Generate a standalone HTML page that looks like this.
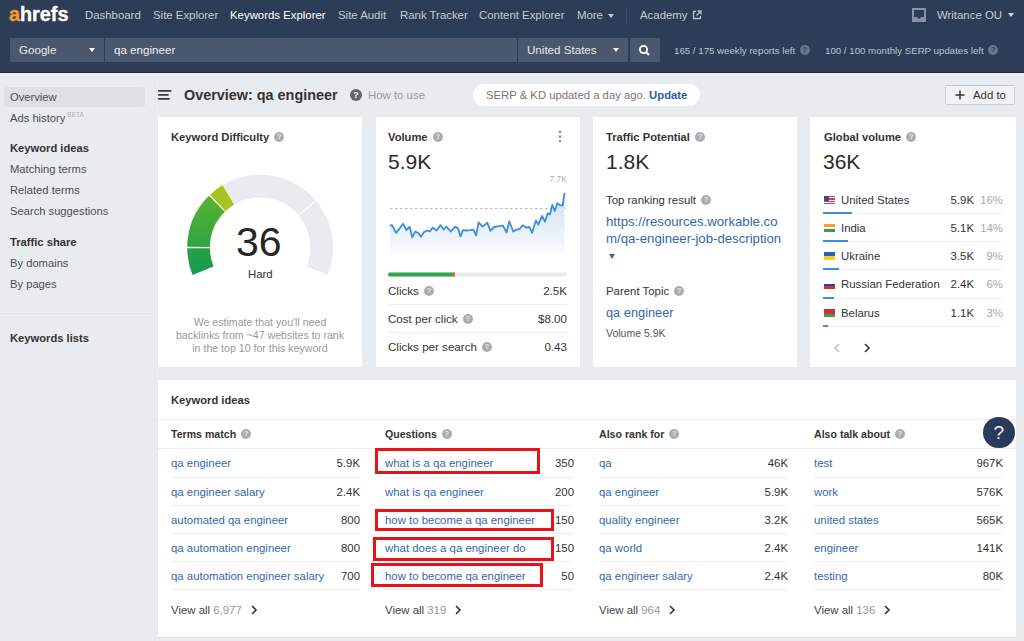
<!DOCTYPE html>
<html><head><meta charset="utf-8">
<style>
*{margin:0;padding:0;box-sizing:border-box}
html,body{width:1024px;height:641px;overflow:hidden;background:#e9ecef;font-family:"Liberation Sans",sans-serif;color:#333;}
.a{position:absolute;white-space:nowrap}
#hdr{position:absolute;left:0;top:0;width:1024px;height:73px;background:#2e3d57;border-bottom:1px solid #222a3f}
.nav{position:absolute;top:8.2px;font-size:11.4px;line-height:14px;color:#c5cbd6}
.box{position:absolute;background:#4a576f;top:38px;height:24px}
.card{position:absolute;background:#fff;top:117px;height:250px;width:204px}
.ct{position:absolute;font-weight:bold;font-size:11.2px;line-height:14px;color:#333}
.q{display:inline-block;width:10px;height:10px;border-radius:50%;background:#a9adb3;color:#e8e8e8;font-size:7.5px;line-height:10px;text-align:center;font-weight:bold;vertical-align:middle;position:relative;top:-1px;margin-left:2px}
.big{position:absolute;font-size:21px;line-height:24px;color:#2a2a2a}
.lk{color:#3567ad}
.sb{position:absolute;left:10px;font-size:11.2px;line-height:14px;color:#4a4d52}
.sbb{font-weight:bold;color:#333}
.row{position:absolute;font-size:11.4px;line-height:14px}
.sep{position:absolute;height:1px;background:#eceef1}
</style></head><body>
<div id="hdr"></div>
<!-- logo -->
<div class="a" style="left:9px;top:1.2px;font-size:22px;line-height:26px;font-weight:bold;color:#fff;transform:scale(0.9,0.9);transform-origin:0 21px;-webkit-text-stroke:0.4px #fff"><span style="color:#f39a26;-webkit-text-stroke:0.4px #f39a26">a</span>hrefs</div>
<div class="a nav" style="left:85px">Dashboard</div>
<div class="a nav" style="left:153px">Site Explorer</div>
<div class="a nav" style="left:230px;color:#fff">Keywords Explorer</div>
<div class="a nav" style="left:338px">Site Audit</div>
<div class="a nav" style="left:400px">Rank Tracker</div>
<div class="a nav" style="left:479px">Content Explorer</div>
<div class="a nav" style="left:577px">More</div><div class="a" style="left:608px;top:14px;width:0;height:0;border-left:3.0px solid transparent;border-right:3.0px solid transparent;border-top:4px solid #c5cbd6"></div>
<div class="a" style="left:626px;top:8px;width:1px;height:16px;background:#3d4a64"></div>
<div class="a nav" style="left:640px">Academy</div><svg class="a" style="left:692px;top:10px" width="10" height="10" viewBox="0 0 10 10"><path d="M4,1.5 H1.5 V8.5 H8.5 V6" fill="none" stroke="#b5bccb" stroke-width="1.3"/><path d="M5.5,1 H9 V4.5 M9,1 L4.5,5.5" fill="none" stroke="#b5bccb" stroke-width="1.3"/></svg>
<svg class="a" style="left:912px;top:8px" width="14" height="14" viewBox="0 0 14 14"><rect x="1" y="1" width="12" height="12" fill="none" stroke="#8991a6" stroke-width="2"/><path d="M1,9 H5 L6,10.5 H8 L9,9 H13 V13 H1Z" fill="#8991a6"/></svg>
<div class="a nav" style="left:937px">Writance OU</div><div class="a" style="left:1008px;top:13px;width:0;height:0;border-left:3.5px solid transparent;border-right:3.5px solid transparent;border-top:4px solid #d5dae3"></div>

<!-- search -->
<div class="box" style="left:10px;width:94px"></div>
<div class="a" style="left:19px;top:43px;font-size:11.6px;line-height:14px;color:#e6e9ef">Google</div>
<div class="a" style="left:88.5px;top:48px;width:0;height:0;border-left:3.5px solid transparent;border-right:3.5px solid transparent;border-top:4.5px solid #fff"></div>
<div class="box" style="left:105px;width:412px"></div>
<div class="a" style="left:114px;top:43px;font-size:11.6px;line-height:14px;color:#eef0f4">qa engineer</div>
<div class="box" style="left:518px;width:110px"></div>
<div class="a" style="left:527px;top:43px;font-size:11.6px;line-height:14px;color:#e6e9ef">United States</div>
<div class="a" style="left:612.5px;top:48px;width:0;height:0;border-left:3.5px solid transparent;border-right:3.5px solid transparent;border-top:4.5px solid #fff"></div>
<div class="box" style="left:630px;width:30px"></div>
<svg class="a" style="left:638px;top:44px" width="13" height="13" viewBox="0 0 13 13"><circle cx="5.5" cy="5.5" r="3.6" fill="none" stroke="#fff" stroke-width="1.8"/><line x1="8.2" y1="8.2" x2="11" y2="11" stroke="#fff" stroke-width="2"/></svg>
<div class="a" style="left:674px;top:44.5px;font-size:9.7px;line-height:12px;color:#bcc3d0">165 / 175 weekly reports left <span class="q" style="background:#6a7489;color:#2f3b56">?</span></div>
<div class="a" style="left:825px;top:44.5px;font-size:9.7px;line-height:12px;color:#bcc3d0">100 / 100 monthly SERP updates left <span class="q" style="background:#6a7489;color:#2f3b56">?</span></div>

<!-- sidebar -->
<div class="a" style="left:4px;top:87px;width:141px;height:20px;background:#dde0e4;border-radius:3px"></div><div class="a" style="left:154px;top:73px;width:1px;height:568px;background:#e4e7eb"></div>
<div class="a sb" style="top:89.5px">Overview</div>
<div class="a sb" style="top:111px">Ads history<span style="font-size:6.5px;color:#b0b3b8;position:relative;top:-5.5px;margin-left:2px">BETA</span></div>
<div class="a sb sbb" style="top:141px">Keyword ideas</div>
<div class="a sb" style="top:162px">Matching terms</div>
<div class="a sb" style="top:183px">Related terms</div>
<div class="a sb" style="top:204px">Search suggestions</div>
<div class="a sb sbb" style="top:235px">Traffic share</div>
<div class="a sb" style="top:256px">By domains</div>
<div class="a sb" style="top:277px">By pages</div>
<div class="a" style="left:0;top:313px;width:153px;height:1px;background:#dfe2e6"></div>
<div class="a sb sbb" style="top:331px">Keywords lists</div>

<!-- title row -->
<svg class="a" style="left:158px;top:89px" width="14" height="12"><path d="M0.9,1.9 H12.6 M0.9,5.9 H9.9 M0.9,9.9 H11" stroke="#3a3a3a" stroke-width="1.8" stroke-linecap="round"/></svg>
<div class="a" style="left:184px;top:86px;font-size:14.4px;line-height:18px;font-weight:bold;color:#333">Overview: qa engineer</div>
<div class="a" style="left:350px;top:89px;width:12px;height:12px;border-radius:50%;background:#666;color:#fff;font-size:9px;line-height:12px;text-align:center;font-weight:bold">?</div>
<div class="a" style="left:368px;top:88px;font-size:11.4px;line-height:14px;color:#999">How to use</div>
<div class="a" style="left:473px;top:84px;width:227px;height:22px;border-radius:11px;background:#fff"></div>
<div class="a" style="left:486px;top:88px;font-size:11.3px;line-height:14px;color:#777">SERP &amp; KD updated a day ago. <b style="color:#2a5fa8">Update</b></div>
<div class="a" style="left:945px;top:85px;width:70px;height:20px;border:1px solid #cdd1d6;border-top-color:#c2c6cc;border-radius:2px;background:#f1f2f4"></div>
<svg class="a" style="left:955px;top:90px" width="10" height="10"><rect x="4.25" y="0.5" width="1.5" height="9" fill="#333"/><rect x="0.5" y="4.25" width="9" height="1.5" fill="#333"/></svg><div class="a" style="left:973px;top:88px;font-size:11.4px;line-height:14px;color:#333">Add to</div>

<!-- cards -->
<div class="card" style="left:158px"></div>
<div class="card" style="left:376px"></div>
<div class="card" style="left:593px"></div>
<div class="card" style="left:810px;width:206px"></div>

<svg class="a" style="left:0;top:0" width="1024" height="641">
<defs>
<linearGradient id="g1" x1="0" y1="0" x2="0" y2="1"><stop offset="0" stop-color="#25a148"/><stop offset="1" stop-color="#159a55"/></linearGradient>
<linearGradient id="g2" x1="0" y1="0" x2="0" y2="1"><stop offset="0" stop-color="#5bb233"/><stop offset="1" stop-color="#2ea443"/></linearGradient>
<linearGradient id="sg" x1="0" y1="0" x2="0" y2="1"><stop offset="0" stop-color="#cfe0f3"/><stop offset="1" stop-color="#fbfcfe"/></linearGradient>
</defs>
<g id="gauge">
<path d="M192.51,274.91 A72.9,72.9 0 0 1 187.20,248.36 L209.90,248.13 A50.2,50.2 0 0 0 213.56,266.41 Z" fill="url(#g1)"/>
<path d="M187.20,246.84 A72.9,72.9 0 0 1 208.91,195.69 L224.85,211.86 A50.2,50.2 0 0 0 209.90,247.07 Z" fill="url(#g2)"/>
<path d="M210.01,194.63 A72.9,72.9 0 0 1 222.55,185.11 L234.25,204.57 A50.2,50.2 0 0 0 225.61,211.13 Z" fill="#a6c41f"/>
<path d="M222.55,185.11 A72.9,72.9 0 0 1 315.45,200.16 L298.22,214.93 A50.2,50.2 0 0 0 234.25,204.57 Z" fill="#e9ebee"/>
<path d="M316.43,201.33 A72.9,72.9 0 0 1 327.69,274.91 L306.64,266.41 A50.2,50.2 0 0 0 298.89,215.74 Z" fill="#e9ebee"/>
</g>
<line x1="390" y1="208.5" x2="566" y2="208.5" stroke="#bbb" stroke-width="1" stroke-dasharray="2.5,2.5"/>
<polygon points="389.8,256 389.8,225.7 392.1,225.1 396.0,232.9 399.5,228.6 403.0,223.7 406.4,230.2 409.7,226.6 412.2,237.4 415.2,231.5 418.1,232.9 421.0,236.8 423.9,232.1 427.3,230.5 429.8,231.5 432.7,227.6 436.6,230.5 440.5,225.1 443.5,229.6 446.4,226.6 450.7,231.5 455.2,226.6 458.1,228.6 460.5,236.4 463.0,230.2 465.9,230.5 469.8,230.2 473.4,229.6 476.1,235.4 478.6,222.3 482.5,226.6 487.4,222.7 490.4,230.9 494.3,227.0 499.1,226.2 503.0,225.7 506.6,232.5 509.3,221.2 513.2,231.5 516.7,229.6 519.6,229.0 522.6,225.3 526.5,227.6 529.4,227.0 532.0,232.9 535.9,220.4 538.2,224.7 542.1,215.9 545.0,221.8 547.6,213.4 549.9,214.5 552.3,204.8 554.8,211.0 557.3,203.2 560.1,205.2 562.6,205.5 564.6,193.0 564.6,256" fill="url(#sg)"/>
<polyline points="389.8,225.7 392.1,225.1 396.0,232.9 399.5,228.6 403.0,223.7 406.4,230.2 409.7,226.6 412.2,237.4 415.2,231.5 418.1,232.9 421.0,236.8 423.9,232.1 427.3,230.5 429.8,231.5 432.7,227.6 436.6,230.5 440.5,225.1 443.5,229.6 446.4,226.6 450.7,231.5 455.2,226.6 458.1,228.6 460.5,236.4 463.0,230.2 465.9,230.5 469.8,230.2 473.4,229.6 476.1,235.4 478.6,222.3 482.5,226.6 487.4,222.7 490.4,230.9 494.3,227.0 499.1,226.2 503.0,225.7 506.6,232.5 509.3,221.2 513.2,231.5 516.7,229.6 519.6,229.0 522.6,225.3 526.5,227.6 529.4,227.0 532.0,232.9 535.9,220.4 538.2,224.7 542.1,215.9 545.0,221.8 547.6,213.4 549.9,214.5 552.3,204.8 554.8,211.0 557.3,203.2 560.1,205.2 562.6,205.5 564.6,193.0" fill="none" stroke="#3c8fdb" stroke-width="1.8" stroke-linejoin="round"/>

<rect x="388" y="272.5" width="179" height="4" rx="2" fill="#e8eaed"/>
<rect x="388" y="272.5" width="67" height="4" rx="2" fill="#2ea44f"/>
<rect x="452.5" y="272.5" width="2.5" height="4" fill="#e1701f"/>
</svg>

<!-- card 1 -->
<div class="a ct" style="left:171px;top:130px">Keyword Difficulty <span class="q">?</span></div>
<div class="a" style="left:236px;top:219px;font-size:41px;line-height:46px;color:#262626">36</div>
<div class="a" style="left:248px;top:267px;font-size:11.4px;line-height:14px;color:#333">Hard</div>
<div class="a" style="left:158px;top:316px;width:204px;text-align:center;font-size:10.6px;line-height:12.8px;color:#999;white-space:normal">We estimate that you'll need<br>backlinks from ~47 websites to rank<br>in the top 10 for this keyword</div>

<!-- card 2 -->
<div class="a ct" style="left:388px;top:130px">Volume <span class="q">?</span></div>
<svg class="a" style="left:558px;top:130px" width="4" height="14"><circle cx="2" cy="2" r="1.2" fill="#888"/><circle cx="2" cy="6.5" r="1.2" fill="#888"/><circle cx="2" cy="11" r="1.2" fill="#888"/></svg>
<div class="a big" style="left:388px;top:150px">5.9K</div>
<div class="a" style="left:549.5px;top:173.5px;font-size:8.5px;line-height:10px;color:#b0b0b0">7.7K</div>
<div class="a row" style="font-size:11.6px;left:388px;top:284px;color:#333">Clicks <span class="q">?</span></div>
<div class="a row" style="font-size:11.6px;left:388px;top:284px;width:179px;text-align:right;color:#333">2.5K</div>
<div class="sep" style="left:388px;top:304px;width:179px"></div>
<div class="a row" style="font-size:11.6px;left:388px;top:312px;color:#333">Cost per click <span class="q">?</span></div>
<div class="a row" style="font-size:11.6px;left:388px;top:312px;width:179px;text-align:right;color:#333">$8.00</div>
<div class="sep" style="left:388px;top:332px;width:179px"></div>
<div class="a row" style="font-size:11.6px;left:388px;top:340px;color:#333">Clicks per search <span class="q">?</span></div>
<div class="a row" style="font-size:11.6px;left:388px;top:340px;width:179px;text-align:right;color:#333">0.43</div>

<!-- card 3 -->
<div class="a ct" style="left:606px;top:130px">Traffic Potential <span class="q">?</span></div>
<div class="a big" style="left:606px;top:150px">1.8K</div>
<div class="a row" style="left:606px;top:193px;color:#333">Top ranking result <span class="q">?</span></div>
<div class="a" style="left:606px;top:213px;font-size:13.2px;line-height:17.2px;color:#3567ad">https://resources.workable.co<br>m/qa-engineer-job-description</div>
<div class="a" style="left:609px;top:254px;width:0;height:0;border-left:3px solid transparent;border-right:3px solid transparent;border-top:5px solid #3567ad"></div>
<div class="a row" style="left:606px;top:284px;color:#333">Parent Topic <span class="q">?</span></div>
<div class="a" style="left:606px;top:305px;font-size:12.8px;line-height:16px;color:#3567ad">qa engineer</div>
<div class="a" style="left:606px;top:327px;font-size:10.5px;line-height:13px;color:#555">Volume 5.9K</div>

<!-- card 4 -->
<div class="a ct" style="left:824px;top:130px">Global volume <span class="q">?</span></div>
<div class="a big" style="left:823px;top:150px">36K</div>
<!-- card4 -->
<div class="a" style="left:824px;top:196px;width:11px;height:8px;background:repeating-linear-gradient(#c4434f 0 1.2px,#fff 1.2px 2.4px)"><div style="width:5px;height:4.5px;background:#3b4a8a"></div></div>
<div class="a row" style="left:841px;top:192.5px;color:#333">United States</div>
<div class="a row" style="left:899px;top:192.5px;width:75px;text-align:right;color:#333">5.9K</div>
<div class="a row" style="left:960px;top:192.5px;width:43px;text-align:right;color:#aaa">16%</div>
<div class="sep" style="left:823px;top:213px;width:180px"></div>
<div class="a" style="left:823px;top:212px;width:29px;height:2px;background:#3c8fdb"></div>
<div class="a" style="left:824px;top:224px;width:11px;height:8px;background:linear-gradient(#f29d38 0 33%,#fff 33% 66%,#3a9a4a 66%)"></div>
<div class="a row" style="left:841px;top:221.2px;color:#333">India</div>
<div class="a row" style="left:899px;top:221.2px;width:75px;text-align:right;color:#333">5.1K</div>
<div class="a row" style="left:960px;top:221.2px;width:43px;text-align:right;color:#aaa">14%</div>
<div class="sep" style="left:823px;top:241px;width:180px"></div>
<div class="a" style="left:823px;top:240px;width:25px;height:2px;background:#3c8fdb"></div>
<div class="a" style="left:824px;top:252px;width:11px;height:8px;background:linear-gradient(#2f62b7 0 50%,#f5cf1f 50%)"></div>
<div class="a row" style="left:841px;top:249.3px;color:#333">Ukraine</div>
<div class="a row" style="left:899px;top:249.3px;width:75px;text-align:right;color:#333">3.5K</div>
<div class="a row" style="left:960px;top:249.3px;width:43px;text-align:right;color:#aaa">9%</div>
<div class="sep" style="left:823px;top:269px;width:180px"></div>
<div class="a" style="left:823px;top:268px;width:16px;height:2px;background:#3c8fdb"></div>
<div class="a" style="left:824px;top:281px;width:11px;height:8px;background:linear-gradient(#fff 0 33%,#2a44a6 33% 66%,#d62d2d 66%)"></div>
<div class="a row" style="left:841px;top:277.4px;color:#333">Russian Federation</div>
<div class="a row" style="left:899px;top:277.4px;width:75px;text-align:right;color:#333">2.4K</div>
<div class="a row" style="left:960px;top:277.4px;width:43px;text-align:right;color:#aaa">6%</div>
<div class="sep" style="left:823px;top:298px;width:180px"></div>
<div class="a" style="left:823px;top:297px;width:11px;height:2px;background:#3c8fdb"></div>
<div class="a" style="left:824px;top:309px;width:11px;height:8px;background:linear-gradient(#c9343a 0 66%,#4a9a48 66%)"></div>
<div class="a row" style="left:841px;top:305.5px;color:#333">Belarus</div>
<div class="a row" style="left:899px;top:305.5px;width:75px;text-align:right;color:#333">1.1K</div>
<div class="a row" style="left:960px;top:305.5px;width:43px;text-align:right;color:#aaa">3%</div>
<div class="sep" style="left:823px;top:326px;width:180px"></div>
<div class="a" style="left:823px;top:325px;width:5px;height:2px;background:#3c8fdb"></div>
<svg class="a" style="left:833px;top:343px" width="8" height="10"><path d="M6,1 L2,5 L6,9" fill="none" stroke="#bbb" stroke-width="1.4"/></svg>
<svg class="a" style="left:863px;top:343px" width="8" height="10"><path d="M2,1 L6,5 L2,9" fill="none" stroke="#333" stroke-width="1.6"/></svg>
<!-- kw -->
<div class="a" style="left:158px;top:380px;width:858px;height:257px;background:#fff;box-shadow:0 1px 0 #dde0e4"></div>
<div class="a ct" style="left:171px;top:393px">Keyword ideas</div>
<div class="sep" style="left:158px;top:419px;width:858px"></div><div class="sep" style="left:158px;top:448px;width:858px"></div>
<div class="a ct" style="font-size:10.6px;left:171px;top:427px">Terms match <span class="q">?</span></div>

<div class="a row lk" style="left:171px;top:456.3px">qa engineer</div>
<div class="a row" style="left:171px;top:456.3px;width:189px;text-align:right;color:#333">5.9K</div>
<div class="sep" style="left:171px;top:477px;width:189px"></div>
<div class="a row lk" style="left:171px;top:484.5px">qa engineer salary</div>
<div class="a row" style="left:171px;top:484.5px;width:189px;text-align:right;color:#333">2.4K</div>
<div class="sep" style="left:171px;top:505px;width:189px"></div>
<div class="a row lk" style="left:171px;top:512.7px">automated qa engineer</div>
<div class="a row" style="left:171px;top:512.7px;width:189px;text-align:right;color:#333">800</div>
<div class="sep" style="left:171px;top:533px;width:189px"></div>
<div class="a row lk" style="left:171px;top:540.9px">qa automation engineer</div>
<div class="a row" style="left:171px;top:540.9px;width:189px;text-align:right;color:#333">800</div>
<div class="sep" style="left:171px;top:561px;width:189px"></div>
<div class="a row lk" style="left:171px;top:569.1px">qa automation engineer salary</div>
<div class="a row" style="left:171px;top:569.1px;width:189px;text-align:right;color:#333">700</div>
<div class="sep" style="left:171px;top:589px;width:189px"></div>
<div class="a row" style="left:171px;top:603px;color:#444">View all <span style="color:#999">6,977</span> <svg width="8" height="10" style="margin-left:5px;vertical-align:-1px"><path d="M2,1 L6,5 L2,9" fill="none" stroke="#333" stroke-width="1.6"/></svg></div>
<div class="a ct" style="font-size:10.6px;left:385px;top:427px">Questions <span class="q">?</span></div>

<div class="a row lk" style="left:385px;top:456.3px">what is a qa engineer</div>
<div class="a row" style="left:385px;top:456.3px;width:189px;text-align:right;color:#333">350</div>
<div class="sep" style="left:385px;top:477px;width:189px"></div>
<div class="a row lk" style="left:385px;top:484.5px">what is qa engineer</div>
<div class="a row" style="left:385px;top:484.5px;width:189px;text-align:right;color:#333">200</div>
<div class="sep" style="left:385px;top:505px;width:189px"></div>
<div class="a row lk" style="left:385px;top:512.7px">how to become a qa engineer</div>
<div class="a row" style="left:385px;top:512.7px;width:189px;text-align:right;color:#333">150</div>
<div class="sep" style="left:385px;top:533px;width:189px"></div>
<div class="a row lk" style="left:385px;top:540.9px">what does a qa engineer do</div>
<div class="a row" style="left:385px;top:540.9px;width:189px;text-align:right;color:#333">150</div>
<div class="sep" style="left:385px;top:561px;width:189px"></div>
<div class="a row lk" style="left:385px;top:569.1px">how to become qa engineer</div>
<div class="a row" style="left:385px;top:569.1px;width:189px;text-align:right;color:#333">50</div>
<div class="sep" style="left:385px;top:589px;width:189px"></div>
<div class="a row" style="left:385px;top:603px;color:#444">View all <span style="color:#999">319</span> <svg width="8" height="10" style="margin-left:5px;vertical-align:-1px"><path d="M2,1 L6,5 L2,9" fill="none" stroke="#333" stroke-width="1.6"/></svg></div>
<div class="a ct" style="font-size:10.6px;left:599px;top:427px">Also rank for <span class="q">?</span></div>

<div class="a row lk" style="left:599px;top:456.3px">qa</div>
<div class="a row" style="left:599px;top:456.3px;width:189px;text-align:right;color:#333">46K</div>
<div class="sep" style="left:599px;top:477px;width:189px"></div>
<div class="a row lk" style="left:599px;top:484.5px">qa engineer</div>
<div class="a row" style="left:599px;top:484.5px;width:189px;text-align:right;color:#333">5.9K</div>
<div class="sep" style="left:599px;top:505px;width:189px"></div>
<div class="a row lk" style="left:599px;top:512.7px">quality engineer</div>
<div class="a row" style="left:599px;top:512.7px;width:189px;text-align:right;color:#333">3.2K</div>
<div class="sep" style="left:599px;top:533px;width:189px"></div>
<div class="a row lk" style="left:599px;top:540.9px">qa world</div>
<div class="a row" style="left:599px;top:540.9px;width:189px;text-align:right;color:#333">2.4K</div>
<div class="sep" style="left:599px;top:561px;width:189px"></div>
<div class="a row lk" style="left:599px;top:569.1px">qa engineer salary</div>
<div class="a row" style="left:599px;top:569.1px;width:189px;text-align:right;color:#333">2.4K</div>
<div class="sep" style="left:599px;top:589px;width:189px"></div>
<div class="a row" style="left:599px;top:603px;color:#444">View all <span style="color:#999">964</span> <svg width="8" height="10" style="margin-left:5px;vertical-align:-1px"><path d="M2,1 L6,5 L2,9" fill="none" stroke="#333" stroke-width="1.6"/></svg></div>
<div class="a ct" style="font-size:10.6px;left:814px;top:427px">Also talk about <span class="q">?</span></div>

<div class="a row lk" style="left:814px;top:456.3px">test</div>
<div class="a row" style="left:814px;top:456.3px;width:189px;text-align:right;color:#333">967K</div>
<div class="sep" style="left:814px;top:477px;width:189px"></div>
<div class="a row lk" style="left:814px;top:484.5px">work</div>
<div class="a row" style="left:814px;top:484.5px;width:189px;text-align:right;color:#333">576K</div>
<div class="sep" style="left:814px;top:505px;width:189px"></div>
<div class="a row lk" style="left:814px;top:512.7px">united states</div>
<div class="a row" style="left:814px;top:512.7px;width:189px;text-align:right;color:#333">565K</div>
<div class="sep" style="left:814px;top:533px;width:189px"></div>
<div class="a row lk" style="left:814px;top:540.9px">engineer</div>
<div class="a row" style="left:814px;top:540.9px;width:189px;text-align:right;color:#333">141K</div>
<div class="sep" style="left:814px;top:561px;width:189px"></div>
<div class="a row lk" style="left:814px;top:569.1px">testing</div>
<div class="a row" style="left:814px;top:569.1px;width:189px;text-align:right;color:#333">80K</div>
<div class="sep" style="left:814px;top:589px;width:189px"></div>
<div class="a row" style="left:814px;top:603px;color:#444">View all <span style="color:#999">136</span> <svg width="8" height="10" style="margin-left:5px;vertical-align:-1px"><path d="M2,1 L6,5 L2,9" fill="none" stroke="#333" stroke-width="1.6"/></svg></div>
<div class="a" style="left:374.5px;top:447.5px;width:165px;height:26.5px;border:3.5px solid #ea1119"></div>
<div class="a" style="left:375px;top:509px;width:179px;height:22px;border:3.5px solid #ea1119"></div>
<div class="a" style="left:373px;top:537px;width:181px;height:24px;border:3.5px solid #ea1119"></div>
<div class="a" style="left:371px;top:563px;width:172px;height:24px;border:3.5px solid #ea1119"></div>
<div class="a" style="left:983px;top:416.5px;width:31.5px;height:31.5px;border-radius:50%;background:#2a3a5a;color:#eef0f4;font-size:19px;line-height:31.5px;text-align:center">?</div>
</body></html>
